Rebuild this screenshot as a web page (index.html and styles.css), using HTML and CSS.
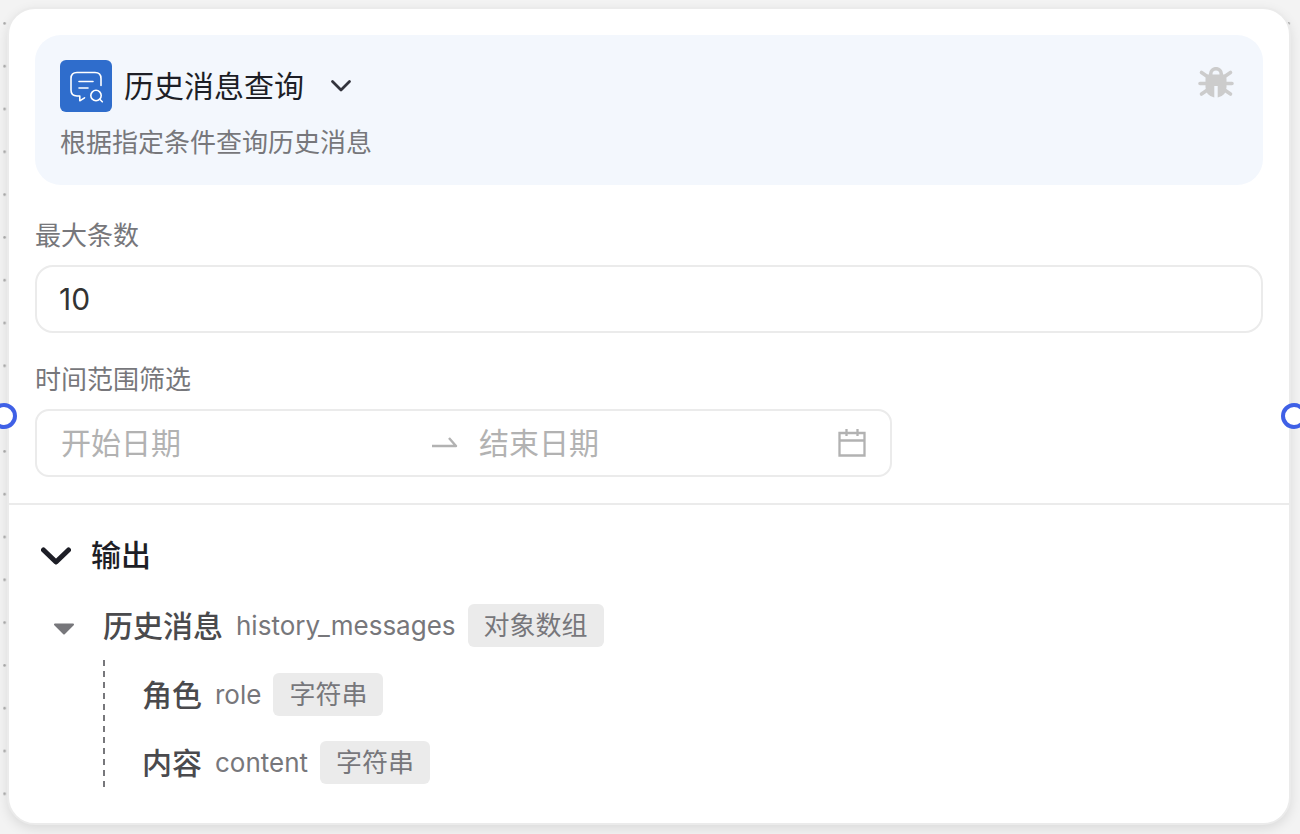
FILE: index.html
```html
<!DOCTYPE html>
<html lang="zh-CN">
	<head>
		<title>历史消息查询</title>
		<meta charset="utf-8">
		<meta name="viewport" content="width=device-width, initial-scale=1">
		<link rel="stylesheet" href="styles.css">
	</head>
	<body>
		<div class="canvas">
			<!-- canvas grid dots -->
			<svg class="grid" width="100%" height="100%" aria-hidden="true">
				<defs>
					<pattern id="dots" x="3.2" y="22" width="42.8" height="42.8" patternUnits="userSpaceOnUse">
						<circle cx="1.4" cy="1.4" r="1.3" fill="#aaa"/>
					</pattern>
				</defs>
				<rect width="100%" height="100%" fill="url(#dots)"/>
			</svg>

			<div class="node">
				<span class="handle handle-left"></span>
				<span class="handle handle-right"></span>

				<form class="node-body">
					<div class="node-header">
						<div class="title-row">
							<svg class="node-icon" viewBox="0 0 52 52" aria-hidden="true">
								<rect width="52" height="52" rx="6" fill="#2f6dcc"/>
								<g fill="none" stroke="#fff" stroke-width="1.6" stroke-linecap="round" stroke-linejoin="round">
									<path d="M41 25.500V18.500Q41 12.500 35 12.500H17Q11 12.500 11 18.500V30Q11 36 17 36H19.800V40.800L24.500 37.800"/>
									<path d="M19 21.500H33M19 28H28"/>
									<circle cx="36" cy="35.500" r="5.200"/>
									<path d="M39.800 39.300L42.300 41.800"/>
								</g>
							</svg>
							<h1>历史消息查询</h1>
							<button type="button" class="icon-btn" aria-label="展开">
								<svg width="22" height="16" viewBox="0 0 22 16"><path d="M2.500 3.500L11 12L19.500 3.500" fill="none" stroke="#33343d" stroke-width="2.800" stroke-linecap="round" stroke-linejoin="round"/></svg>
							</button>
							<button type="button" class="icon-btn debug-btn" aria-label="调试">
								<svg width="36" height="32" viewBox="0 0 36 32">
									<g fill="none" stroke="#ccc" stroke-width="3.600" stroke-linecap="round">
										<path d="M12.700 8V7A5.300 5.300 0 0 1 23.300 7V8"/>
										<path d="M3.500 5.500L9 9.300M32.500 5.500L27 9.300M2 16.500H8M34 16.500H28M3.500 27L9 23.300M32.500 27L27 23.300"/>
									</g>
									<path d="M9.500 7.500H26.500Q28.500 9.500 28.500 12V20Q28.500 28.500 19.700 30.500V19H16.300V30.500Q7.500 28.500 7.500 20V12Q7.500 9.500 9.500 7.500Z" fill="#ccc"/>
								</svg>
							</button>
						</div>
						<p>根据指定条件查询历史消息</p>
					</div>

					<div class="field">
						<label for="maxCount">最大条数</label>
						<input type="text" id="maxCount" class="text-input" value="10">
					</div>

					<div class="field">
						<label for="startDate">时间范围筛选</label>
						<div class="date-range">
							<input type="text" id="startDate" placeholder="开始日期">
							<svg class="range-arrow" width="26" height="12" viewBox="0 0 26 12" aria-hidden="true"><path d="M0 9H24L17 1" fill="none" stroke="#b2b2b2" stroke-width="2.400" stroke-linejoin="round"/></svg>
							<input type="text" id="endDate" placeholder="结束日期" aria-label="结束日期">
							<svg width="28" height="28" viewBox="0 0 28 28" aria-hidden="true"><path d="M1.500 4H26.500V26.500H1.500ZM1.500 11.500H26.500M8.500 0V7M19.500 0V7" fill="none" stroke="#b2b2b2" stroke-width="2.300"/></svg>
						</div>
					</div>
				</form>

				<section class="output">
					<div class="output-title">
						<button type="button" class="icon-btn" aria-label="收起">
							<svg width="30" height="24" viewBox="0 0 30 24"><path d="M2.500 7L15 19L27.500 7" fill="none" stroke="#1d1e26" stroke-width="5" stroke-linecap="round" stroke-linejoin="round"/></svg>
						</button>
						<h2>输出</h2>
					</div>

					<div class="param param-root">
						<button type="button" class="icon-btn" aria-label="收起">
							<svg width="22" height="20" viewBox="0 0 22 20"><path d="M2 8.500H20L11 17.500Z" fill="#77777b" stroke="#77777b" stroke-width="2" stroke-linejoin="round"/></svg>
						</button>
						<strong>历史消息</strong>
						<span class="key">history_messages</span>
						<span class="tag">对象数组</span>
					</div>
					<div class="children">
						<div class="param">
							<strong>角色</strong>
							<span class="key">role</span>
							<span class="tag">字符串</span>
						</div>
						<div class="param">
							<strong>内容</strong>
							<span class="key">content</span>
							<span class="tag">字符串</span>
						</div>
					</div>
				</section>
			</div>
		</div>
	</body>
</html>
```
FILE: styles.css
```css
*
{
	box-sizing: border-box;
}
body
{
	margin: 0;
	font-family: Inter, "Noto Sans CJK SC", sans-serif;
	font-size: 26px;
	line-height: 36px;
	color: #77777b;
	background: #f3f3f3;
}
h1, h2, p
{
	margin: 0;
}
.canvas
{
	position: relative;
	min-height: 100vh;
	padding: 7px 9px 9px 7px;
	overflow: hidden;
}
.grid
{
	position: absolute;
	top: 0;
	left: 0;
}

/* node card */
.node
{
	position: relative;
	background: #fff;
	border: 2px solid #ebebeb;
	border-radius: 28px;
	box-shadow: 0 4px 12px rgba(0, 0, 0, 0.1);
}
.handle
{
	position: absolute;
	top: 50%;
	width: 26px;
	height: 26px;
	margin-top: -13px;
	border: 4px solid #3f60e6;
	border-radius: 50%;
	background: #fff;
}
.handle-left
{
	left: -18px;
}
.handle-right
{
	right: -18px;
}
.node-body
{
	padding: 26px;
	border-bottom: 2px solid #ebebeb;
}
.node-header
{
	padding: 25px;
	padding-bottom: 24px;
	margin-bottom: 33px;
	border-radius: 26px;
	background: #f3f7fd;
}
.title-row
{
	display: flex;
	align-items: center;
	margin-bottom: 13px;
}
.node-icon
{
	width: 52px;
	height: 52px;
	margin-right: 12px;
}
h1
{
	margin-right: 26px;
	font-size: 30px;
	font-weight: 400;
	color: #1d1e26;
}
.icon-btn
{
	display: flex;
	padding: 0;
	border: 0;
	background: none;
	cursor: pointer;
}
.debug-btn
{
	align-self: flex-start;
	margin-top: 7px;
	margin-left: auto;
	margin-right: 4px;
}

/* form fields */
.field + .field
{
	margin-top: 29px;
}
.field label
{
	display: block;
	margin-bottom: 11px;
}
.text-input, .date-range
{
	width: 100%;
	height: 68px;
	padding: 0 24px;
	border: 2px solid #ebebeb;
	border-radius: 18px;
	background: #fff;
}
.text-input
{
	padding: 0 22px;
}
input
{
	font-family: inherit;
	font-size: 30px;
	color: #333;
}
.date-range
{
	display: flex;
	align-items: center;
	max-width: 857px;
	border-radius: 14px;
}
.date-range input
{
	flex: 1;
	min-width: 0;
	padding: 0;
	border: 0;
	background: none;
}
.range-arrow
{
	margin: 0 21px 0 12px;
}
::placeholder
{
	color: #b2b2b2;
	opacity: 1;
}

/* output params */
.output
{
	padding: 28px 32px 36px;
}
.output-title
{
	display: flex;
	align-items: center;
	height: 44px;
	margin-bottom: 27px;
}
h2
{
	margin-left: 20px;
	font-size: 30px;
	font-weight: 500;
	color: #1d1e26;
}
.param
{
	display: flex;
	align-items: center;
}
.param-root
{
	margin-left: 12px;
}
.param-root .icon-btn
{
	margin-right: 28px;
}
.param strong
{
	font-size: 30px;
	font-weight: 500;
	color: #4a4a4d;
}
.key
{
	margin: 0 12px 0 13px;
}
.tag
{
	height: 43px;
	padding: 0 16px;
	border-radius: 6px;
	line-height: 43px;
	background: #ebebeb;
}
.children
{
	display: flex;
	flex-direction: column;
	gap: 25px;
	margin-top: 13px;
	margin-left: 62px;
	padding: 13px 0 3px 39px;
	background: repeating-linear-gradient(#77777b 0 6px, transparent 6px 11px) left top / 2px 100% no-repeat;
}
```
